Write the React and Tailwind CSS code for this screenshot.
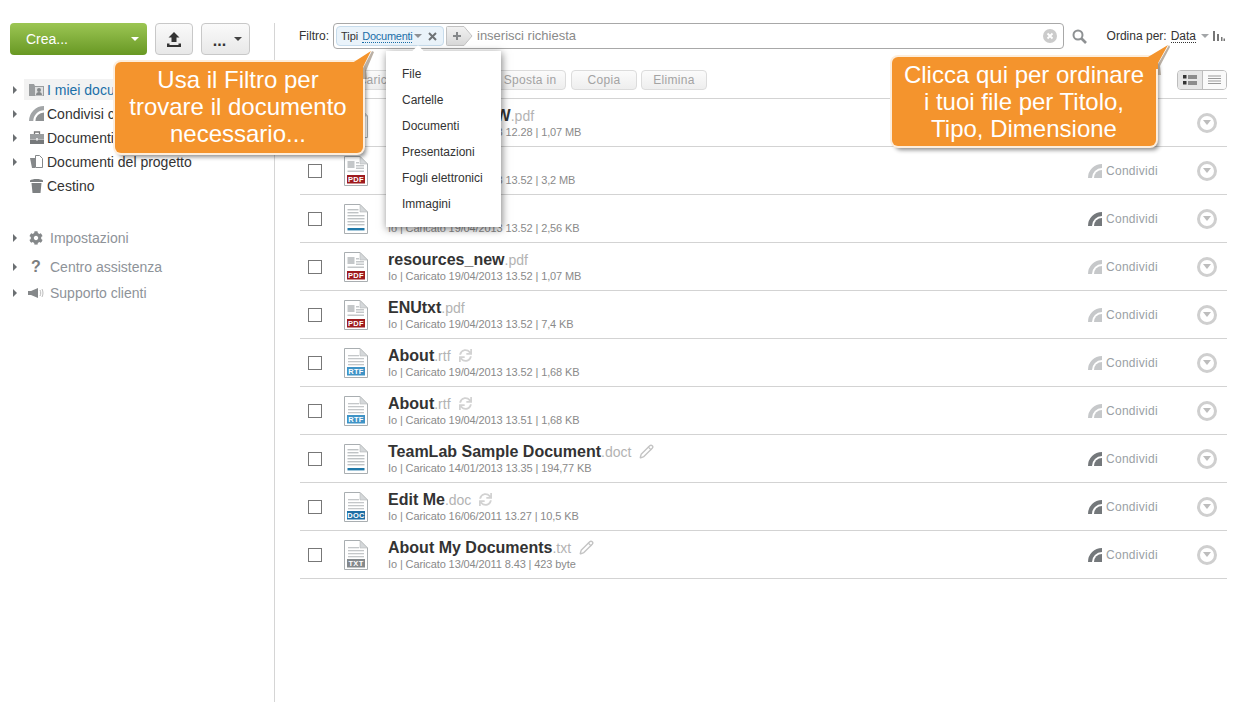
import React from "react";
import { Pencil } from "lucide-react";
import { FaSync, FaCog } from "react-icons/fa";

const rows = [
  { name: "resources_NEW", ext: ".pdf", meta: "Io | Caricato 19/04/2013 12.28 | 1,07 MB", type: "pdf", dark: false },
  { name: "resources", ext: ".pdf", meta: "Io | Caricato 19/04/2013 13.52 | 3,2 MB", type: "pdf", dark: false },
  { name: "Sample", ext: ".docx", meta: "Io | Caricato 19/04/2013 13.52 | 2,56 KB", type: "docx", dark: true },
  { name: "resources_new", ext: ".pdf", meta: "Io | Caricato 19/04/2013 13.52 | 1,07 MB", type: "pdf", dark: false },
  { name: "ENUtxt", ext: ".pdf", meta: "Io | Caricato 19/04/2013 13.52 | 7,4 KB", type: "pdf", dark: false },
  { name: "About", ext: ".rtf", meta: "Io | Caricato 19/04/2013 13.52 | 1,68 KB", type: "rtf", dark: false, extra: "sync" },
  { name: "About", ext: ".rtf", meta: "Io | Caricato 19/04/2013 13.51 | 1,68 KB", type: "rtf", dark: false, extra: "sync" },
  { name: "TeamLab Sample Document", ext: ".doct", meta: "Io | Caricato 14/01/2013 13.35 | 194,77 KB", type: "docx", dark: true, extra: "edit" },
  { name: "Edit Me", ext: ".doc", meta: "Io | Caricato 16/06/2011 13.27 | 10,5 KB", type: "doc", dark: true, extra: "sync" },
  { name: "About My Documents", ext: ".txt", meta: "Io | Caricato 13/04/2011 8.43 | 423 byte", type: "txt", dark: true, extra: "edit" },
];

const badge = {
  pdf: { fill: "#9e1b1e", label: "PDF" },
  rtf: { fill: "#3f93c6", label: "RTF" },
  doc: { fill: "#1f6fa5", label: "DOC" },
  txt: { fill: "#84898c", label: "TXT" },
};

function FileIcon({ type }) {
  const b = badge[type];
  return (
    <svg width="24" height="30" viewBox="0 0 24 30" className="shrink-0">
      <path d="M.5.5H16L23.5 8v21.500H.5z" fill="#fff" stroke="#a9aeb1" />
      <path d="M16 .5V8h7.500z" fill="#d5d8da" stroke="#b5b9bb" strokeWidth=".6" />
      {type === "pdf" && (
        <g fill="#c4c7c9">
          <rect x="3.500" y="5" width="7" height="7" />
          <rect x="12" y="6" width="3" height="1.500" />
          <rect x="12" y="9" width="8" height="1.500" />
          <rect x="12" y="11.500" width="8" height="1.500" />
          <rect x="3.500" y="14.500" width="16.500" height="1.500" />
        </g>
      )}
      {type === "docx" && (
        <g>
          <g fill="#bfc3c5">
            <rect x="3.500" y="5" width="11" height="1.400" />
            <rect x="3.500" y="8" width="11" height="1.400" />
            <rect x="3.500" y="11" width="17" height="1.400" />
            <rect x="3.500" y="14" width="17" height="1.400" />
            <rect x="3.500" y="17" width="17" height="1.400" />
            <rect x="3.500" y="20" width="17" height="1.400" />
          </g>
          <rect x="3.500" y="24" width="17" height="2.400" fill="#1f78a8" />
        </g>
      )}
      {(type === "rtf" || type === "doc" || type === "txt") && (
        <g fill="#c4c7c9">
          <rect x="4" y="7" width="11" height="1.300" />
          <rect x="4" y="10" width="16" height="1.300" />
          <rect x="4" y="13" width="16" height="1.300" />
          <rect x="4" y="16" width="16" height="1.300" />
        </g>
      )}
      {b && (
        <g>
          <rect x="3" y="19" width="18" height="8.500" fill={b.fill} />
          <text x="12" y="26" textAnchor="middle" fontSize="7.500" fontWeight="700" fill="#fff" fontFamily="Liberation Sans" letterSpacing=".3">
            {b.label}
          </text>
        </g>
      )}
    </svg>
  );
}

function ShareIcon({ dark, size = 14 }) {
  const c = dark ? "#74787b" : "#c6c8ca";
  return (
    <svg width={size} height={size} viewBox="0 0 14 14" className="shrink-0">
      <path d="M0 14A14 14 0 0 1 14 0v4A10 10 0 0 0 4 14z" fill={c} />
      <path d="M6 14A8 8 0 0 1 14 6v8z" fill={c} />
    </svg>
  );
}

function Circle() {
  return (
    <div className="flex h-5 w-5 shrink-0 items-center justify-center rounded-full border-[3px] border-[#cfcfcf]">
      <svg width="8" height="5" viewBox="0 0 8 5">
        <path d="M0 0h8L4 5z" fill="#bdbdbd" />
      </svg>
    </div>
  );
}

function Caret({ color = "#888", w = 8, h = 4 }) {
  return (
    <svg width={w} height={h} viewBox="0 0 8 4" className="shrink-0">
      <path d="M0 0h8L4 4z" fill={color} />
    </svg>
  );
}

function Arrow() {
  return (
    <span className="flex w-3.5 shrink-0 pl-0.5">
      <svg width="6" height="8" viewBox="0 0 6 8">
        <path d="M1 0l4 4-4 4z" fill="#6b6f72" />
      </svg>
    </span>
  );
}

function FileRow({ r }) {
  return (
    <div className="flex h-12 items-center border-b border-[#d3d3d3]">
      <div className="w-11 shrink-0 pl-2">
        <div className="h-3.5 w-3.5 border border-[#777]" />
      </div>
      <FileIcon type={r.type} />
      <div className="ml-5 min-w-0 flex-1 pb-0.5">
        <div className="flex items-center">
          <span className="text-base/5 font-bold text-[#333]">{r.name}</span>
          <span className="text-sm/5 text-[#b3b3b3]">{r.ext}</span>
          {r.extra === "sync" && <FaSync size={13} className="ml-2 text-[#d2d2d2]" />}
          {r.extra === "edit" && <Pencil size={15} strokeWidth={2.2} className="ml-2 text-[#c4c4c4]" />}
        </div>
        <div className="text-[11px] leading-3 tracking-[-0.01em] text-[#8a8a8a]">{r.meta}</div>
      </div>
      <div className="flex items-center gap-1 text-xs tracking-wide text-[#9a9fa5]">
        <ShareIcon dark={r.dark} />
        <span>Condividi</span>
      </div>
      <div className="ml-[39px] mr-2.5">
        <Circle />
      </div>
    </div>
  );
}

function SideRow({ icon, label, active, arrow = true }) {
  return (
    <div className="h-6">
      <div className="flex h-[21px] items-center">
        {arrow ? <Arrow /> : <span className="w-3.5 shrink-0" />}
        <div className={"mr-1 flex h-full flex-1 items-center pl-0.5 " + (active ? "bg-[#f2f2f2]" : "")}>
          <span className="flex w-[21px] shrink-0 justify-center">{icon}</span>
          <span className={active ? "text-[#1a6fa8]" : "text-[#333]"}>{label}</span>
        </div>
      </div>
    </div>
  );
}

function SupportRow({ icon, label, className }) {
  return (
    <div className={"flex h-6 items-center text-[#8e9399] " + className}>
      <Arrow />
      <span className="ml-0.5 flex w-5 shrink-0 justify-center">{icon}</span>
      <span className="ml-1">{label}</span>
    </div>
  );
}

function ActionButton({ children, className = "" }) {
  return (
    <div className={"flex h-5 items-center justify-center rounded-sm border border-[#dcdcdc] bg-gradient-to-b from-[#fbfbfb] to-[#eeeeee] text-xs tracking-wide text-[#a3a3a3] " + className}>
      {children}
    </div>
  );
}

function Bullet({ children, className }) {
  return (
    <div className={"absolute z-20 rounded-md bg-[#f4942d] pt-1 text-center text-2xl leading-[27px] text-white ring-2 ring-[#fdeedd] shadow-[3px_4px_4px_rgba(0,0,0,0.45)] " + className}>
      {children}
    </div>
  );
}

export default function App() {
  return (
    <div className="relative flex h-screen overflow-hidden bg-white pt-[23px] font-['Liberation_Sans','Arial',sans-serif] text-sm">
      <aside className="w-[275px] shrink-0 border-r border-[#d5d5d5] pl-2.5">
        <div className="flex gap-2">
          <div className="flex h-8 w-[137px] items-center justify-between rounded-sm bg-gradient-to-b from-[#9cc653] to-[#689822] pl-4 pr-2 text-white">
            <span>Crea...</span>
            <Caret color="#fff" />
          </div>
          <div className="flex h-8 w-[38px] items-center justify-center rounded-sm border border-[#c8c8c8] bg-gradient-to-b from-[#fafafa] to-[#e8e8e8]">
            <svg width="14" height="15" viewBox="0 0 14 15">
              <path d="M7 0l5.500 5.500H9.500V10h-5V5.500h-3zM0 11.500h2.500V13h9v-1.500H14V15H0z" fill="#333" />
            </svg>
          </div>
          <div className="flex h-8 w-[49px] items-center justify-center gap-2 rounded-sm border border-[#c8c8c8] bg-gradient-to-b from-[#fafafa] to-[#e8e8e8] pl-1">
            <span className="mt-1 text-base font-bold text-[#333]">...</span>
            <Caret color="#444" />
          </div>
        </div>

        <div className="mt-6">
          <SideRow
            active
            label="I miei documenti"
            icon={
              <svg width="15" height="13" viewBox="0 0 15 13">
                <path d="M0 1h5l1 2h9v10H0z" fill="#9a9d9f" />
                <rect x="6" y="4" width="8" height="8.500" fill="#dfe0e1" />
                <circle cx="10" cy="7" r="2" fill="#85888a" />
                <path d="M7 12c0-2 1.300-3 3-3s3 1 3 3z" fill="#85888a" />
              </svg>
            }
          />
          <SideRow
            label="Condivisi con me"
            icon={
              <svg width="15" height="15" viewBox="0 0 14 14">
                <path d="M0 14A14 14 0 0 1 14 0v4A10 10 0 0 0 4 14z" fill="#a2a5a7" />
                <path d="M6 14A8 8 0 0 1 14 6v8z" fill="#8e9193" />
              </svg>
            }
          />
          <SideRow
            label="Documenti comuni"
            icon={
              <svg width="14" height="13" viewBox="0 0 14 13">
                <path d="M4.500 3V1h5v2" fill="none" stroke="#777" strokeWidth="1.300" />
                <rect y="3" width="14" height="5" fill="#9a9d9f" />
                <rect y="8.500" width="14" height="4.500" fill="#76797b" />
                <rect x="6" y="7" width="2" height="2.500" fill="#dfe0e1" />
              </svg>
            }
          />
          <SideRow
            label="Documenti del progetto"
            icon={
              <svg width="13" height="15" viewBox="0 0 13 15">
                <path d="M0 4h5v10H2z" fill="#85888a" />
                <path d="M5.500 1.500h4l3 3v9h-7z" fill="#fff" stroke="#85888a" />
              </svg>
            }
          />
          <SideRow
            arrow={false}
            label="Cestino"
            icon={
              <svg width="13" height="15" viewBox="0 0 13 15">
                <path d="M0 2.500C2 .5 11 .5 13 2.500V4H0zM1.500 5h10l-1 10h-8z" fill="#7d8082" />
              </svg>
            }
          />
        </div>

        <SupportRow className="mt-[27px]" label="Impostazioni" icon={<FaCog size={14} className="text-[#85888a]" />} />
        <SupportRow className="mt-[5px]" label="Centro assistenza" icon={<span className="text-base font-bold text-[#7b7e80]">?</span>} />
        <SupportRow
          className="mt-0.5"
          label="Supporto clienti"
          icon={
            <svg width="16" height="12" viewBox="0 0 16 12">
              <path d="M0 4h3l7-3v10L3 8H0z" fill="#85888a" />
              <path d="M12 3c1 2 1 4 0 6M14 2c1.300 2.500 1.300 5.500 0 8" fill="none" stroke="#bbb" />
            </svg>
          }
        />
      </aside>

      <main className="min-w-0 flex-1 pl-[25px] pr-1.5">
        <div className="-ml-px flex h-[26px] items-center text-xs text-[#333]">
          <span className="w-[34px] shrink-0">Filtro:</span>
          <div className="flex h-full flex-1 items-center rounded-sm border border-[#a8a8a8] pl-0.5 pr-1.5">
            <div className="flex h-5 w-[108px] shrink-0 items-center rounded-sm border border-[#c7dcec] bg-[#eaf3fa] pl-1 text-[11px]">
              <span>Tipi</span>
              <span className="ml-1 border-b border-dotted border-[#1a6fa8] leading-3 tracking-tight text-[#1a6fa8]">Documenti</span>
              <span className="ml-0.5">
                <Caret color="#8c9094" />
              </span>
              <svg width="9" height="9" viewBox="0 0 9 9" className="ml-1.5">
                <path d="M1 1l7 7M8 1L1 8" stroke="#6e7275" strokeWidth="2" />
              </svg>
            </div>
            <svg width="27" height="20" viewBox="0 0 27 20" className="ml-0.5 shrink-0">
              <defs>
                <linearGradient id="plusbg" x1="0" y1="0" x2="0" y2="1">
                  <stop offset="0" stopColor="#f2f2f2" />
                  <stop offset="1" stopColor="#d8d8d8" />
                </linearGradient>
              </defs>
              <path d="M1.500.5H18L26 10l-8 9.500H1.500a1 1 0 0 1-1-1V1.500a1 1 0 0 1 1-1z" fill="url(#plusbg)" stroke="#c2c2c2" />
              <path d="M7 10h8M11 6v8" stroke="#85888a" strokeWidth="2" />
            </svg>
            <span className="ml-1 flex-1 text-[13px] text-[#8a8a8a]">inserisci richiesta</span>
            <svg width="14" height="14" viewBox="0 0 14 14" className="shrink-0">
              <circle cx="7" cy="7" r="7" fill="#cbcbcb" />
              <path d="M4.500 4.500l5 5M9.500 4.500l-5 5" stroke="#fff" strokeWidth="1.800" />
            </svg>
          </div>
          <div className="flex w-[163px] shrink-0 items-center pl-2 pr-0.5">
            <svg width="15" height="15" viewBox="0 0 15 15" className="shrink-0">
              <circle cx="6" cy="6" r="4.500" fill="none" stroke="#8e9193" strokeWidth="2" />
              <path d="M9.500 9.500l4.500 4.500" stroke="#8e9193" strokeWidth="2.600" />
            </svg>
            <span className="ml-auto">Ordina per:</span>
            <span className="ml-1 border-b border-dotted border-[#333] leading-3">Data</span>
            <span className="ml-[5px]">
              <Caret color="#a3a6a8" />
            </span>
            <svg width="12" height="10" viewBox="0 0 12 10" className="ml-1 shrink-0">
              <path d="M0 0h2v10H0zM4 3h2v7H4zM8 6h1.500v4H8zM10.500 7.500H12V10h-1.500z" fill="#777" />
            </svg>
          </div>
        </div>

        <div className="mb-2 mt-5 flex h-[21px] items-center">
          <ActionButton className="ml-8 w-[82px]">Scarica</ActionButton>
          <ActionButton className="ml-20 w-[72px]">Sposta in</ActionButton>
          <ActionButton className="ml-[5px] w-[66px]">Copia</ActionButton>
          <ActionButton className="ml-1 w-[66px]">Elimina</ActionButton>
          <div className="ml-auto flex h-5 w-[50px] overflow-hidden rounded-sm border border-[#bdbdbd]">
            <div className="flex flex-1 items-center justify-center border-r border-[#bdbdbd] bg-[#e6e6e6]">
              <svg width="14" height="10" viewBox="0 0 14 10">
                <path d="M0 0h3.500v3.500H0zM0 6h3.500v3.500H0zM5 .5h9v1H5zM5 2.500h9v1H5zM5 6.500h9v1H5zM5 8.500h9v1H5z" fill="#333" />
              </svg>
            </div>
            <div className="flex flex-1 items-center justify-center bg-[#fafafa]">
              <svg width="13" height="10" viewBox="0 0 13 10">
                <path d="M0 .5h13v1H0zM0 3h13v1H0zM0 5.500h13v1H0zM0 8h13v1H0z" fill="#999" />
              </svg>
            </div>
          </div>
        </div>

        <div className="border-t border-[#d3d3d3]">
          {rows.map((r, i) => (
            <FileRow key={i} r={r} />
          ))}
        </div>
      </main>

      <div className="absolute left-[386px] top-[51px] z-10 w-[115px] bg-white px-4 py-2.5 text-xs text-[#333] shadow-[1px_2px_8px_rgba(0,0,0,0.5)]">
        <div className="absolute -top-1 left-7 h-2 w-2 rotate-45 bg-white" />
        {["File", "Cartelle", "Documenti", "Presentazioni", "Fogli elettronici", "Immagini"].map((t) => (
          <div key={t} className="flex h-[26px] items-center whitespace-nowrap">
            {t}
          </div>
        ))}
      </div>

      <Bullet className="left-[115px] top-[62px] h-[91px] w-[248px] pr-0.5">
        <svg width="22" height="28" viewBox="0 0 22 28" className="absolute -right-3 -top-[11px]">
          <path d="M19 0 10 17 10 28 14 28 13 20 21 1z" fill="#8a7a68" opacity=".6" />
          <path d="M0 11.500 18 0 10 16 10 22 0 22z" fill="#f4942d" />
        </svg>
        Usa il Filtro per
        <br />
        trovare il documento
        <br />
        necessario...
      </Bullet>

      <Bullet className="left-[892px] top-[57px] h-[89px] w-[264px]">
        <svg width="26" height="30" viewBox="0 0 26 30" className="absolute -right-3.5 -top-3">
          <path d="M25 0 14 19 14 30 17 30 16 21 26 2z" fill="#8a7a68" opacity=".6" />
          <path d="M4 12 24 0 14 18 14 24 0 24 0 12z" fill="#f4942d" />
        </svg>
        Clicca qui per ordinare
        <br />i tuoi file per Titolo,
        <br />
        Tipo, Dimensione
      </Bullet>
    </div>
  );
}
